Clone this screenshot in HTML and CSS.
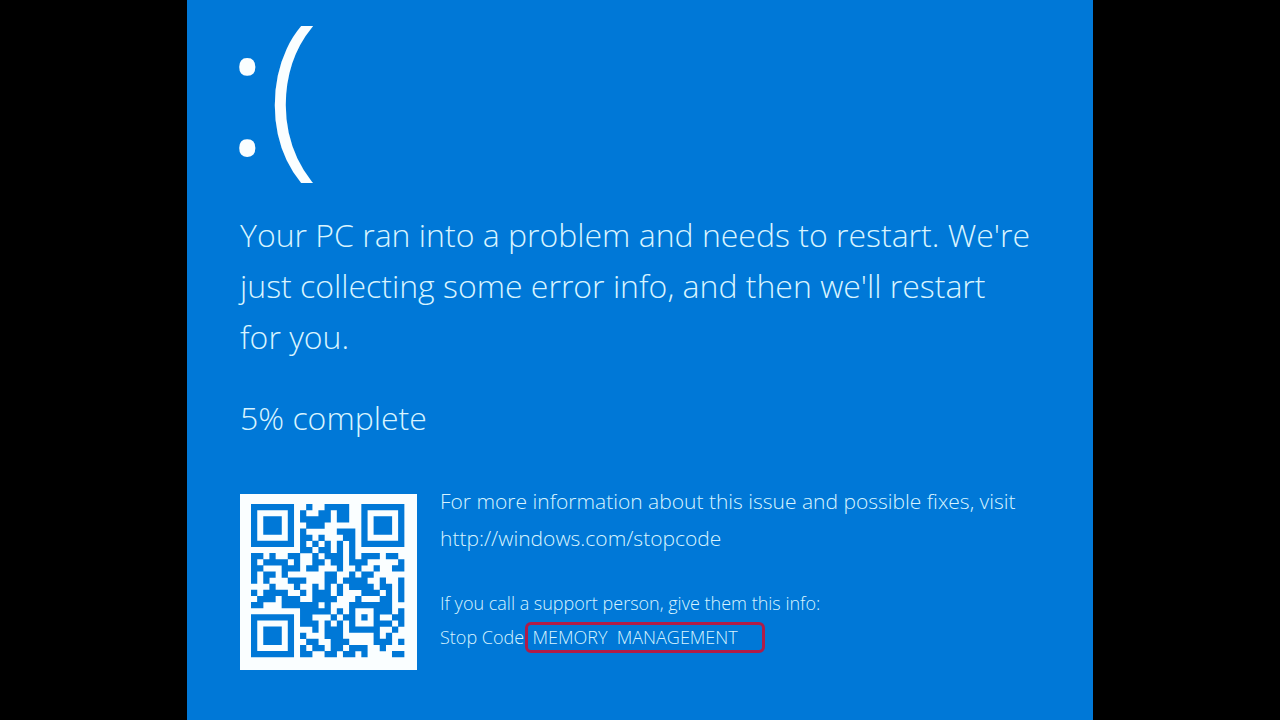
FILE: index.html
```
<!DOCTYPE html>
<html lang="en">
<head>
    <meta charset="UTF-8">
    <meta name="viewport" content="width=device-width, initial-scale=1.0">
    <title>Your PC ran into a problem</title>
    <link rel="stylesheet" href="styles.css">
</head>
<body>
    <main class="screen">
        <div class="face">:(</div>
        <h1 class="message">Your PC ran into a problem and needs to restart. We're just collecting some error info, and then we'll restart for you.</h1>
        <p class="progress">5% complete</p>

        <div class="details">
            <svg class="qr" viewBox="0 0 177 176" role="img" aria-label="QR code">
                <rect width="177" height="176" fill="#fafeff"/>
                <path id="qr-modules" fill="#0078d7" transform="translate(11 10) scale(6.13)"/>
            </svg>
            <div class="info">
                <p class="visit">For more information about this issue and possible fixes, visit <a class="url" href="http://windows.com/stopcode">http://windows.com/stopcode</a></p>
                <p class="support">If you call a support person, give them this info:</p>
                <p class="support code-line">Stop Code:<span class="stop-code">MEMORY&nbsp; MANAGEMENT</span></p>
            </div>
        </div>
    </main>

    <script src="qr.js"></script>
</body>
</html>
```
FILE: styles.css
```
* {
    box-sizing: border-box;
}

body {
    margin: 0;
    background-color: #000;
    font-family: "Open Sans", "Noto Sans", sans-serif;
    font-weight: 300;
    color: #d8f4ff;
}

p, h1 {
    margin: 0;
    font-weight: 300;
}

.screen {
    max-width: 906px;
    min-height: 100vh;
    margin: 0 auto;
    padding: 0 53px 48px;
    background-color: #0078d7;
}

.face {
    height: 209px;
    margin-left: -14px;
    font-size: 178px;
    line-height: 170px;
    color: #fafeff;
    -webkit-text-stroke: 2px #fafeff;
}

.message {
    max-width: 792px;
    font-size: 32px;
    line-height: 51px;
}

.progress {
    margin-top: 30px;
    font-size: 32px;
    line-height: 51px;
}

.details {
    display: flex;
    gap: 23px;
    margin-top: 51px;
}

.qr {
    flex: none;
    width: 177px;
    height: 176px;
}

.info {
    flex: 1;
    margin-top: -11px;
}

.visit {
    margin-bottom: 29px;
    font-size: 21px;
    line-height: 37px;
}

.url {
    display: block;
    color: inherit;
    text-decoration: none;
}

.support {
    font-size: 18px;
    line-height: 34px;
}

.code-line {
    display: flex;
    align-items: center;
}

.stop-code {
    width: 240px;
    height: 31px;
    margin-left: -3px;
    padding-left: 4px;
    border: 3px solid #b01c48;
    border-radius: 6px;
    line-height: 25px;
}
```
FILE: qr.js
```
// one string per row, # is a filled module
const rows = [
    "#######..#..####..#######",
    "#.....#.#..##.##..#.....#",
    "#.###.#.#####.##..#.###.#",
    "#.###.#..###......#.###.#",
    "#.###.#.#.....###.#.###.#",
    "#.....#.##.#...##.#.....#",
    "#######.#.#.#.#.#.#######",
    "........##.##.#.#........",
    "##.#..##..#.###.#.###.##.",
    "#.####.#..##.##.###.....#",
    "##...###.##...#..#..#..##",
    "#.##.#......##..#.##.....",
    "#.#...###...##.####..#..#",
    "...#...#..#.#.#.####.##.#",
    "#.####..#.###.#...###.#.#",
    ".###.###..####...#...##.#",
    "##...######.#...#######..",
    "........#####.#.#...###.#",
    "#######.##...#.##.#.#..##",
    "#.....#.###.#.#.#...###.#",
    "#.###.#...#.###.#####..#.",
    "#.###.#.#...###.....#.#..",
    "#.###.#..##..###....###.#",
    "#.....#.#.##.##.###..#...",
    "#######.##..##.##.#....##"
];

let d = "";
rows.forEach((row, y) => {
    [...row].forEach((cell, x) => {
        if (cell === "#") {
            d += `M${x} ${y}h1.02v1.02h-1.02z`;
        }
    });
});
document.getElementById("qr-modules").setAttribute("d", d);
```
